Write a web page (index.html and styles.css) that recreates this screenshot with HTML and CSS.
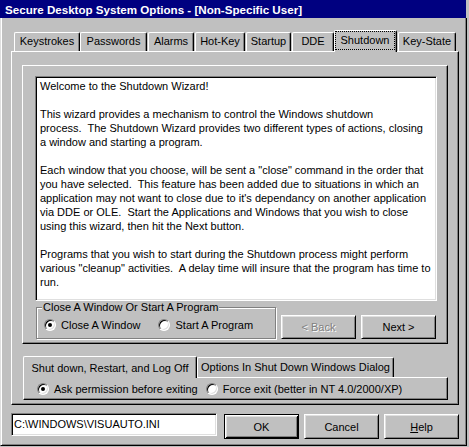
FILE: index.html
```html
<!DOCTYPE html>
<html>
<head>
<meta charset="utf-8">
<link rel="stylesheet" href="styles.css">
</head>
<body>
<div class="window">
  <div class="titlebar">Secure Desktop System Options - [Non-Specific User]</div>
  <div class="client">
    <div class="tabstrip outer">
      <div class="tab t-keys">Keystrokes</div>
      <div class="tab t-pass">Passwords</div>
      <div class="tab t-alarm">Alarms</div>
      <div class="tab t-hot">Hot-Key</div>
      <div class="tab t-start">Startup</div>
      <div class="tab t-dde">DDE</div>
      <div class="tab sel t-shut"><span class="focus">Shutdown</span></div>
      <div class="tab t-state">Key-State</div>
    </div>
    <div class="panel outer-panel">
      <div class="wizard">
        <div class="textbox">Welcome to the Shutdown Wizard!

This wizard provides a mechanism to control the Windows shutdown
process.  The Shutdown Wizard provides two different types of actions, closing
a window and starting a program.

Each window that you choose, will be sent a "close" command in the order that
you have selected.  This feature has been added due to situations in which an
application may not want to close due to it's dependancy on another application
via DDE or OLE.  Start the Applications and Windows that you wish to close
using this wizard, then hit the Next button.

Programs that you wish to start during the Shutdown process might perform
various "cleanup" activities.  A delay time will insure that the program has time to
run.</div>
        <div class="wizrow">
          <fieldset class="group">
            <legend>Close A Window Or Start A Program</legend>
            <div class="radios">
              <label class="opt"><span class="radio on"></span>Close A Window</label>
              <label class="opt opt2"><span class="radio"></span>Start A Program</label>
            </div>
          </fieldset>
          <div class="btn disabled wbtn">&lt; Back</div>
          <div class="btn wbtn">Next &gt;</div>
        </div>
      </div>
      <div class="tabstrip inner">
        <div class="tab sel t-shutdown">Shut down, Restart, and Log Off</div>
        <div class="tab t-opts">Options In Shut Down Windows Dialog</div>
      </div>
      <div class="panel inner-panel">
        <label class="opt"><span class="radio on"></span>Ask permission before exiting</label>
        <label class="opt opt3"><span class="radio"></span>Force exit (better in NT 4.0/2000/XP)</label>
      </div>
    </div>
    <div class="bottom">
      <div class="field">C:\WINDOWS\VISUAUTO.INI</div>
      <div class="btn default bbtn">OK</div>
      <div class="btn bbtn">Cancel</div>
      <div class="btn bbtn"><u>H</u>elp</div>
    </div>
  </div>
</div>
</body>
</html>
```
FILE: styles.css
```css
* { box-sizing: border-box; }
html, body { margin: 0; padding: 0; background: #c0c0c0; }
body {
  width: 469px;
  height: 447px;
  overflow: hidden;
  font-family: "Liberation Sans", Arial, sans-serif;
  font-size: 11px;
  color: #000;
}
.window {
  width: 467px;
  height: 446px;
  display: flex;
  flex-direction: column;
}
.titlebar {
  height: 18px;
  width: 466px;
  flex: none;
  background: #000080;
  color: #fff;
  font-weight: bold;
  font-size: 11.6px;
  line-height: 20px;
  padding-left: 5px;
  white-space: nowrap;
}
.client {
  flex: 1;
  border-left: 1px solid #dfdfdf;
  border-right: 1px solid #000;
  border-bottom: 1px solid #000;
  box-shadow: inset 1px 0 #fff, inset -1px -1px #808080;
  padding: 12px 7px 0 10px;
  display: flex;
  flex-direction: column;
}

/* tabs */
.tabstrip {
  display: flex;
  align-items: flex-end;
  flex: none;
}
.tabstrip.outer { height: 21px; padding-left: 3px; }
.tab {
  height: 19px;
  border-top: 1px solid #fff;
  border-left: 1px solid #fff;
  border-right: 1px solid #000;
  box-shadow: inset -1px 0 #808080;
  border-top-left-radius: 2px;
  border-top-right-radius: 2px;
  line-height: 17px;
  text-align: center;
  white-space: nowrap;
  background: #c0c0c0;
}
.tab.sel {
  position: relative;
  z-index: 1;
  height: 22px;
  margin-bottom: -1px;
}
.t-keys { width: 66px; }
.t-pass { width: 67px; }
.t-alarm { width: 46px; margin-left: 1px; }
.t-hot { width: 50px; margin-left: 1px; }
.t-start { width: 45px; margin-left: 1px; }
.t-dde { width: 42px; margin-left: 1px; }
.t-shut { width: 63px; padding: 0 0 0 0; }
.t-state { width: 58px; margin-left: 1px; }
.focus {
  display: block;
  height: 19px;
  margin-right: 1px;
  border: 1px dotted #000;
  line-height: 16px;
}

.panel {
  border-top: 1px solid #fff;
  border-left: 1px solid #fff;
  border-right: 1px solid #000;
  border-bottom: 1px solid #000;
  box-shadow: inset -1px -1px #808080;
}
.outer-panel {
  width: 448px;
  height: 354px;
  flex: none;
  padding: 13px 0 0 10px;
  display: flex;
  flex-direction: column;
}

/* wizard frame */
.wizard {
  width: 426px;
  height: 279px;
  flex: none;
  border-top: 1px solid #fff;
  border-left: 1px solid #fff;
  border-right: 1px solid #000;
  border-bottom: 1px solid #000;
  box-shadow: inset -1px -1px #808080;
  padding: 10px 0 0 12px;
  display: flex;
  flex-direction: column;
}
.textbox {
  width: 402px;
  height: 225px;
  flex: none;
  background: #fff;
  border: 1px solid;
  border-color: #808080 #fff #fff #808080;
  box-shadow: inset 1px 1px #000, inset -1px -1px #dfdfdf;
  padding: 2px 0 0 4px;
  white-space: pre;
  line-height: 14px;
  overflow: hidden;
}
.wizrow {
  display: flex;
  align-items: flex-end;
  height: 38px;
  flex: none;
}
.group {
  width: 240px;
  margin: 0 0 0 1px;
  padding: 0 0 6px 5px;
  border: 1px solid #808080;
  box-shadow: 1px 1px #fff, inset 1px 1px #fff;
  min-inline-size: 0;
}
.group legend {
  padding: 0 1px;
  line-height: 13px;
  background: #c0c0c0;
}
.radios {
  display: flex;
  align-items: center;
  height: 14px;
  margin-top: 4px;
  padding-left: 2px;
}
.opt {
  display: flex;
  align-items: center;
  white-space: nowrap;
}
.radio {
  position: relative;
  flex: none;
  width: 12px;
  height: 12px;
  border-radius: 50%;
  background: #fff;
  border: 1px solid;
  border-color: #808080 #fff #fff #808080;
  box-shadow: inset 1px 1px #000, inset -1px -1px #dfdfdf;
  margin-right: 5px;
}
.radio.on::after {
  content: "";
  position: absolute;
  left: 3px;
  top: 3px;
  width: 4px;
  height: 4px;
  border-radius: 50%;
  background: #000;
}
.opt2 { margin-left: 18px; }

.btn {
  display: flex;
  align-items: center;
  justify-content: center;
  flex: none;
  border: 1px solid;
  border-color: #fff #000 #000 #fff;
  box-shadow: inset 1px 1px #dfdfdf, inset -1px -1px #808080;
  background: #c0c0c0;
}
.btn.disabled {
  color: #808080;
  text-shadow: 1px 1px #fff;
}
.btn.default {
  border-color: #000;
  box-shadow: inset 1px 1px #fff, inset -1px -1px #000, inset 2px 2px #dfdfdf, inset -2px -2px #808080;
}
.wbtn {
  width: 75px;
  height: 24px;
  margin-left: 5px;
}

/* inner tabs */
.tabstrip.inner {
  height: 23px;
  margin-top: 10px;
  padding-left: 1px;
}
.t-shutdown {
  width: 174px;
  height: 24px;
  line-height: 22px;
}
.t-opts {
  width: 197px;
  height: 20px;
  line-height: 18px;
}
.inner-panel {
  width: 425px;
  height: 23px;
  flex: none;
  margin-left: 1px;
  padding-left: 13px;
  display: flex;
  align-items: center;
}
.opt3 { margin-left: 8px; }

/* bottom row */
.bottom {
  display: flex;
  align-items: flex-start;
  margin-top: 8px;
  height: 26px;
  flex: none;
}
.field {
  width: 209px;
  height: 23px;
  background: #fff;
  border: 1px solid;
  border-color: #808080 #fff #fff #808080;
  box-shadow: inset 1px 1px #000, inset -1px -1px #dfdfdf;
  padding-left: 2px;
  line-height: 20px;
  white-space: nowrap;
}
.bbtn {
  width: 75px;
  height: 25px;
  margin-top: 1px;
  margin-left: 5px;
}
.bbtn.default { margin-left: 7px; }
```
